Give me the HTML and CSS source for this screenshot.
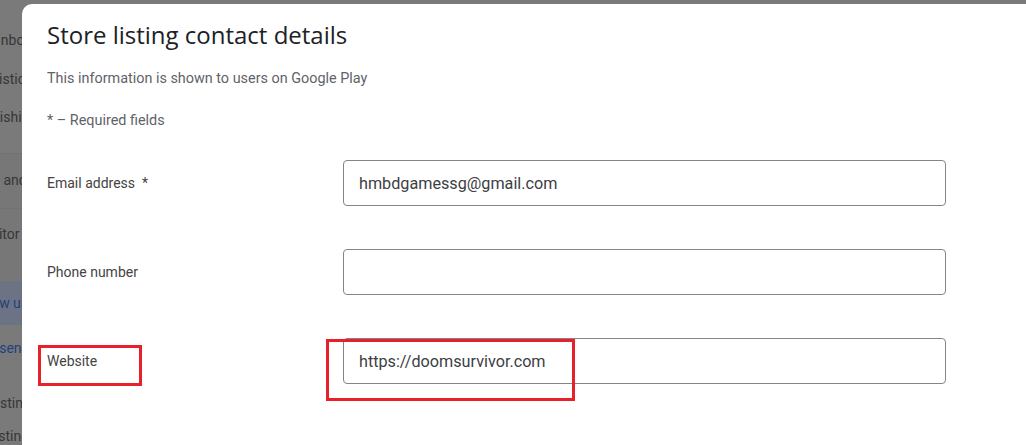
FILE: index.html
```html
<!DOCTYPE html>
<html lang="en">
<head>
  <meta charset="UTF-8">
  <meta name="viewport" content="width=device-width, initial-scale=1.0">
  <title>Store listing contact details</title>
  <link rel="stylesheet" href="styles.css">
</head>
<body>
  <nav class="sidebar">
    <div class="nav-item inbox">Inbox</div>
    <div class="nav-item stats">Statistics</div>
    <div class="nav-item publish">Publishing overview</div>
    <div class="nav-section sec-test">
      <div class="nav-item test">Test and release</div>
    </div>
    <div class="nav-section sec-monitor">
      <div class="nav-item monitor">Monitor and improve</div>
    </div>
    <div class="nav-section sec-grow">
      <div class="nav-item grow">Grow users</div>
    </div>
    <div class="nav-item presence">Store presence</div>
    <div class="nav-item listings">Store listings</div>
    <div class="nav-item custom">Custom store listings</div>
  </nav>

  <div class="dialog">
    <h1>Store listing contact details</h1>
    <p class="hint">This information is shown to users on Google Play</p>
    <p class="hint required">* &ndash; Required fields</p>

    <div class="row">
      <label for="email">Email address &nbsp;*</label>
      <input type="text" id="email" value="hmbdgamessg@gmail.com">
    </div>

    <div class="row">
      <label for="phone">Phone number</label>
      <input type="text" id="phone">
    </div>

    <div class="row">
      <label for="site">Website</label>
      <input type="text" id="site" value="https://doomsurvivor.com">
      <div class="mark mark-label"></div>
      <div class="mark mark-input"></div>
    </div>
  </div>
</body>
</html>
```

FILE: styles.css
```css
body {
  margin: 0;
  background-color: #7a7a7a;
  font-family: Roboto, "Liberation Sans", sans-serif;
  overflow: hidden;
  height: 445px;
}
.sidebar {
  width: 22px;
  height: 445px;
  overflow: hidden;
  padding-top: 30px;
  box-sizing: border-box;
  font-size: 14px;
  color: #363636;
}
.nav-item {
  height: 20px;
  line-height: 20px;
  white-space: nowrap;
}
.inbox { margin-left: -3px; }
.stats { margin-left: -26px; margin-top: 19px; }
.publish { margin-left: -28px; margin-top: 18px; }
.nav-section {
  border-top: 1px solid #727272;
  background-color: #777;
}
.sec-test {
  margin-top: 26px;
  padding: 16px 0 18px;
}
.sec-monitor {
  padding: 15px 0 37px;
}
.sec-grow {
  background-color: #6c7384;
  color: #23407a;
  padding: 12px 0;
  border-top: none;
}
.test { margin-left: -27px; }
.monitor { margin-left: -29px; }
.grow { margin-left: -23px; }
.presence { margin-left: -57px; margin-top: 13px; color: #23407a; }
.listings { margin-left: -43px; margin-top: 35px; }
.custom { margin-left: -96px; margin-top: 13px; }

.dialog {
  position: absolute;
  left: 22px;
  top: 4px;
  right: 0;
  bottom: 0;
  background-color: #fff;
  border-top-left-radius: 10px;
  padding: 16px 0 0 25px;
}
h1 {
  font-family: "Open Sans", Roboto, sans-serif;
  font-size: 24px;
  font-weight: 400;
  color: #202124;
  margin: 0;
  line-height: 30px;
}
.hint {
  font-size: 14.4px;
  color: #5f6368;
  margin: 19px 0 0;
  line-height: 20px;
}
.required {
  margin-top: 22px;
  margin-bottom: 29px;
}
.row {
  position: relative;
  display: flex;
  align-items: center;
  height: 46px;
  margin-bottom: 43px;
}
label {
  width: 296px;
  font-size: 14px;
  color: #444;
}
input {
  width: 603px;
  height: 46px;
  box-sizing: border-box;
  border: 1px solid #80868b;
  border-radius: 4px;
  padding: 0 15px;
  font-family: Roboto, sans-serif;
  font-size: 16.2px;
  color: #3c4043;
  outline: none;
}
.mark {
  position: absolute;
  border: 3px solid #e8202a;
  box-sizing: border-box;
}
.mark-label {
  left: -9px;
  top: 7px;
  width: 104px;
  height: 41px;
}
.mark-input {
  left: 279px;
  top: 1px;
  width: 249px;
  height: 62px;
}
```
